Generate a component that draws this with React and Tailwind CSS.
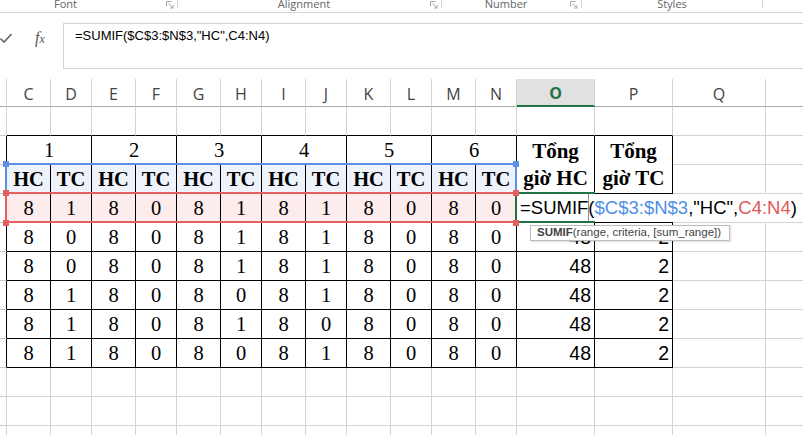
import React from "react";

const DATA = [
  [8, 1, 8, 0, 8, 1, 8, 1, 8, 0, 8, 0],
  [8, 0, 8, 0, 8, 1, 8, 1, 8, 0, 8, 0],
  [8, 0, 8, 0, 8, 1, 8, 1, 8, 0, 8, 0],
  [8, 1, 8, 0, 8, 0, 8, 1, 8, 0, 8, 0],
  [8, 1, 8, 0, 8, 1, 8, 0, 8, 0, 8, 0],
  [8, 1, 8, 0, 8, 0, 8, 1, 8, 0, 8, 0],
];
const LETTERS = ["C", "D", "E", "F", "G", "H", "I", "J", "K", "L", "M", "N", "O", "P", "Q"];

const G = "border-r border-b border-[#d4d4d4]";
const GR = "border-b border-[#d4d4d4]";
const RH = "border-r border-b border-r-[#d4d4d4] border-b-[#c8c8c8]";
const RHT = "border-r border-b border-r-black border-b-[#c8c8c8]";
const CELL_SERIF =
  "flex items-center justify-center border-r border-b border-black font-['Liberation_Serif','Times_New_Roman',serif] text-[20.5px] text-black leading-none";
const CELL_NUM =
  "flex items-center justify-end pr-[3px] pt-[2px] border-r border-b border-black font-['Liberation_Sans',Arial,sans-serif] text-[19.5px] text-black leading-none";

function Launcher() {
  return (
    <svg width="8" height="8" viewBox="0 0 8 8" className="shrink-0 mt-[1px]">
      <path d="M0.5 5.5V0.5H5.5" fill="none" stroke="#a8a8a8" strokeWidth="1" />
      <path d="M2.5 2.5L7 7M7 4V7H4" fill="none" stroke="#a8a8a8" strokeWidth="1" />
    </svg>
  );
}

function Ribbon() {
  return (
    <div className="h-[13px] border-b border-[#d5d5d5] flex items-start text-[11px] text-[#666] font-['Open_Sans',sans-serif]">
      <div className="w-[178px] flex items-start">
        <span className="ml-[54px] leading-[8px]">Font</span>
        <span className="flex-1" />
        <Launcher />
        <span className="ml-[3px] w-px h-[8px] bg-[#d5d5d5]" />
      </div>
      <div className="w-[264px] flex items-start">
        <span className="flex-1 text-center leading-[8px]">Alignment</span>
        <Launcher />
        <span className="ml-[3px] w-px h-[8px] bg-[#d5d5d5]" />
      </div>
      <div className="w-[140px] flex items-start">
        <span className="flex-1 text-center leading-[8px]">Number</span>
        <Launcher />
        <span className="ml-[3px] w-px h-[8px] bg-[#d5d5d5]" />
      </div>
      <div className="w-[181px] flex items-start">
        <span className="flex-1 text-center leading-[8px]">Styles</span>
        <span className="w-px h-[8px] bg-[#d5d5d5]" />
      </div>
    </div>
  );
}

function FormulaBar() {
  return (
    <div className="mt-[10px] h-[46px] flex">
      <div className="w-[63px] flex items-start pt-[9px]">
        <svg width="12" height="11" viewBox="0 0 12 11" className="shrink-0 mt-[1px]">
          <path d="M0.5 5.5L4 9L11.5 1" fill="none" stroke="#6b6b6b" strokeWidth="1.6" />
        </svg>
        <span className="ml-[23px] -mt-[2px] italic font-['Liberation_Serif',serif] text-[16px] text-[#555] leading-[16px]">
          f<span className="text-[12px]">x</span>
        </span>
      </div>
      <div className="flex-1 border-t border-b border-l border-[#d4d4d4] pl-[11px] pt-[2px] font-['Liberation_Sans',Arial,sans-serif] text-[13px] leading-[20px] text-black whitespace-nowrap">
        =SUMIF($C$3:$N$3,"HC",C4:N4)
      </div>
    </div>
  );
}

function Sheet() {
  const rows = [];
  // header row
  rows.push(<div key="h0" className="border-r border-b border-r-[#d4d4d4] border-b-[#ababab]" />);
  LETTERS.forEach((l) => {
    if (l === "O") {
      rows.push(
        <div
          key="hO"
          className="flex items-center justify-center pt-[2px] bg-[#e1e1e1] border-r border-b-2 border-r-[#d4d4d4] border-b-[#217346] text-[#217346] font-bold"
        >
          O
        </div>
      );
    } else {
      rows.push(
        <div
          key={"h" + l}
          className="flex items-center justify-center pt-[2px] border-r border-b border-r-[#d4d4d4] border-b-[#ababab] text-[#444]"
        >
          {l}
        </div>
      );
    }
  });
  rows.push(<div key="hR" className="border-b border-b-[#ababab]" />);

  // row 2
  rows.push(<div key="r2h" className={RH} />);
  for (let i = 0; i < 14; i++) {
    rows.push(<div key={"r2" + i} className="border-r border-b border-r-[#d4d4d4] border-b-black" />);
  }
  rows.push(<div key="r2q" className={G} />);
  rows.push(<div key="r2r" className={GR} />);

  // row 3
  rows.push(<div key="r3h" className={RHT} />);
  [1, 2, 3, 4, 5, 6].forEach((n) => {
    rows.push(
      <div key={"r3" + n} className={"col-span-2 " + CELL_SERIF}>
        {n}
      </div>
    );
  });
  rows.push(
    <div
      key="r3o"
      className="row-span-2 flex flex-col items-center justify-center border-r border-b border-black font-['Liberation_Serif','Times_New_Roman',serif] text-[21px] font-bold text-black leading-[27px]"
    >
      <span>Tổng</span>
      <span>giờ HC</span>
    </div>
  );
  rows.push(
    <div
      key="r3p"
      className="row-span-2 flex flex-col items-center justify-center border-r border-b border-black font-['Liberation_Serif','Times_New_Roman',serif] text-[21px] font-bold text-black leading-[27px]"
    >
      <span>Tổng</span>
      <span>giờ TC</span>
    </div>
  );
  rows.push(<div key="r3q" className={G} />);
  rows.push(<div key="r3r" className={GR} />);

  // row 4
  rows.push(<div key="r4h" className={RHT} />);
  for (let i = 0; i < 12; i++) {
    rows.push(
      <div key={"r4" + i} className={"bg-[#edf2fb] font-bold " + CELL_SERIF}>
        {i % 2 === 0 ? "HC" : "TC"}
      </div>
    );
  }
  rows.push(<div key="r4q" className={G} />);
  rows.push(<div key="r4r" className={GR} />);

  // data rows
  DATA.forEach((row, ri) => {
    rows.push(<div key={"d" + ri + "h"} className={RHT} />);
    row.forEach((v, ci) => {
      rows.push(
        <div key={"d" + ri + "-" + ci} className={(ri === 0 ? "bg-[#fcecec] " : "") + CELL_SERIF}>
          {v}
        </div>
      );
    });
    rows.push(
      <div key={"d" + ri + "o"} className={CELL_NUM}>
        {ri === 0 ? "" : "48"}
      </div>
    );
    rows.push(
      <div key={"d" + ri + "p"} className={CELL_NUM}>
        {ri === 0 ? "" : "2"}
      </div>
    );
    rows.push(<div key={"d" + ri + "q"} className={G} />);
    rows.push(<div key={"d" + ri + "r"} className={GR} />);
  });

  // empty rows below
  for (let r = 0; r < 3; r++) {
    rows.push(<div key={"e" + r + "h"} className={RH} />);
    for (let i = 0; i < 15; i++) {
      rows.push(<div key={"e" + r + "-" + i} className={G} />);
    }
    rows.push(<div key={"e" + r + "r"} className={GR} />);
  }

  return (
    <div className="mt-[10px] grid grid-cols-[7px_44px_41px_44px_41px_44px_41px_44px_41px_44px_41px_44px_41px_78px_78px_93px_37px] grid-rows-[28px] auto-rows-[29px] font-['Open_Sans',sans-serif] text-[16px] leading-none">
      {rows}
    </div>
  );
}

export default function App() {
  return (
    <div className="relative w-[803px] h-[435px] overflow-hidden bg-white">
      <Ribbon />
      <FormulaBar />
      <Sheet />

      {/* range highlight borders */}
      <div className="absolute left-[5px] top-[163px] w-[512px] h-[31px] border-2 border-[#5b8ee6]" />
      <div className="absolute left-[5px] top-[192px] w-[512px] h-[31px] border-2 border-[#e45f5f]" />

      {/* in-cell editor */}
      <div className="absolute left-[517px] top-[194px] w-[286px] h-[28px] bg-white flex items-center pl-[3px] whitespace-nowrap font-['Liberation_Sans',Arial,sans-serif] text-[18.5px] text-black leading-none">
        <span>=SUMIF</span>
        <span className="inline-block w-px h-[28px] bg-[#8c8c8c] -mr-px" />
        <span>(</span>
        <span className="text-[#4f8fe6]">$C$3:$N$3</span>
        <span>,"HC",</span>
        <span className="text-[#e05a5a]">C4:N4</span>
        <span>)</span>
      </div>
      <div className="absolute left-[515px] top-[192px] w-[80px] h-[31px] border-2 border-r-0 border-[#217346]" />

      {/* handles */}
      <div className="absolute left-[3px] top-[161px] w-[6px] h-[6px] bg-[#5b8ee6]" />
      <div className="absolute left-[513px] top-[161px] w-[6px] h-[6px] bg-[#5b8ee6]" />
      <div className="absolute left-[3px] top-[190px] w-[6px] h-[6px] bg-[#e45f5f]" />
      <div className="absolute left-[513px] top-[190px] w-[6px] h-[6px] bg-[#e45f5f]" />
      <div className="absolute left-[3px] top-[220px] w-[6px] h-[6px] bg-[#e45f5f]" />
      <div className="absolute left-[513px] top-[220px] w-[6px] h-[6px] bg-[#e45f5f]" />

      {/* function tooltip */}
      <div className="absolute left-[530px] top-[225px] w-[200px] h-[16px] bg-white border border-[#bcbcbc] shadow-[1px_1px_2px_rgba(0,0,0,0.15)] flex items-center pl-[6px] whitespace-nowrap font-['Liberation_Sans',Arial,sans-serif] text-[11.5px] text-[#444] leading-none">
        <span className="font-bold">SUMIF</span>
        <span>(range, criteria, [sum_range])</span>
      </div>
    </div>
  );
}
